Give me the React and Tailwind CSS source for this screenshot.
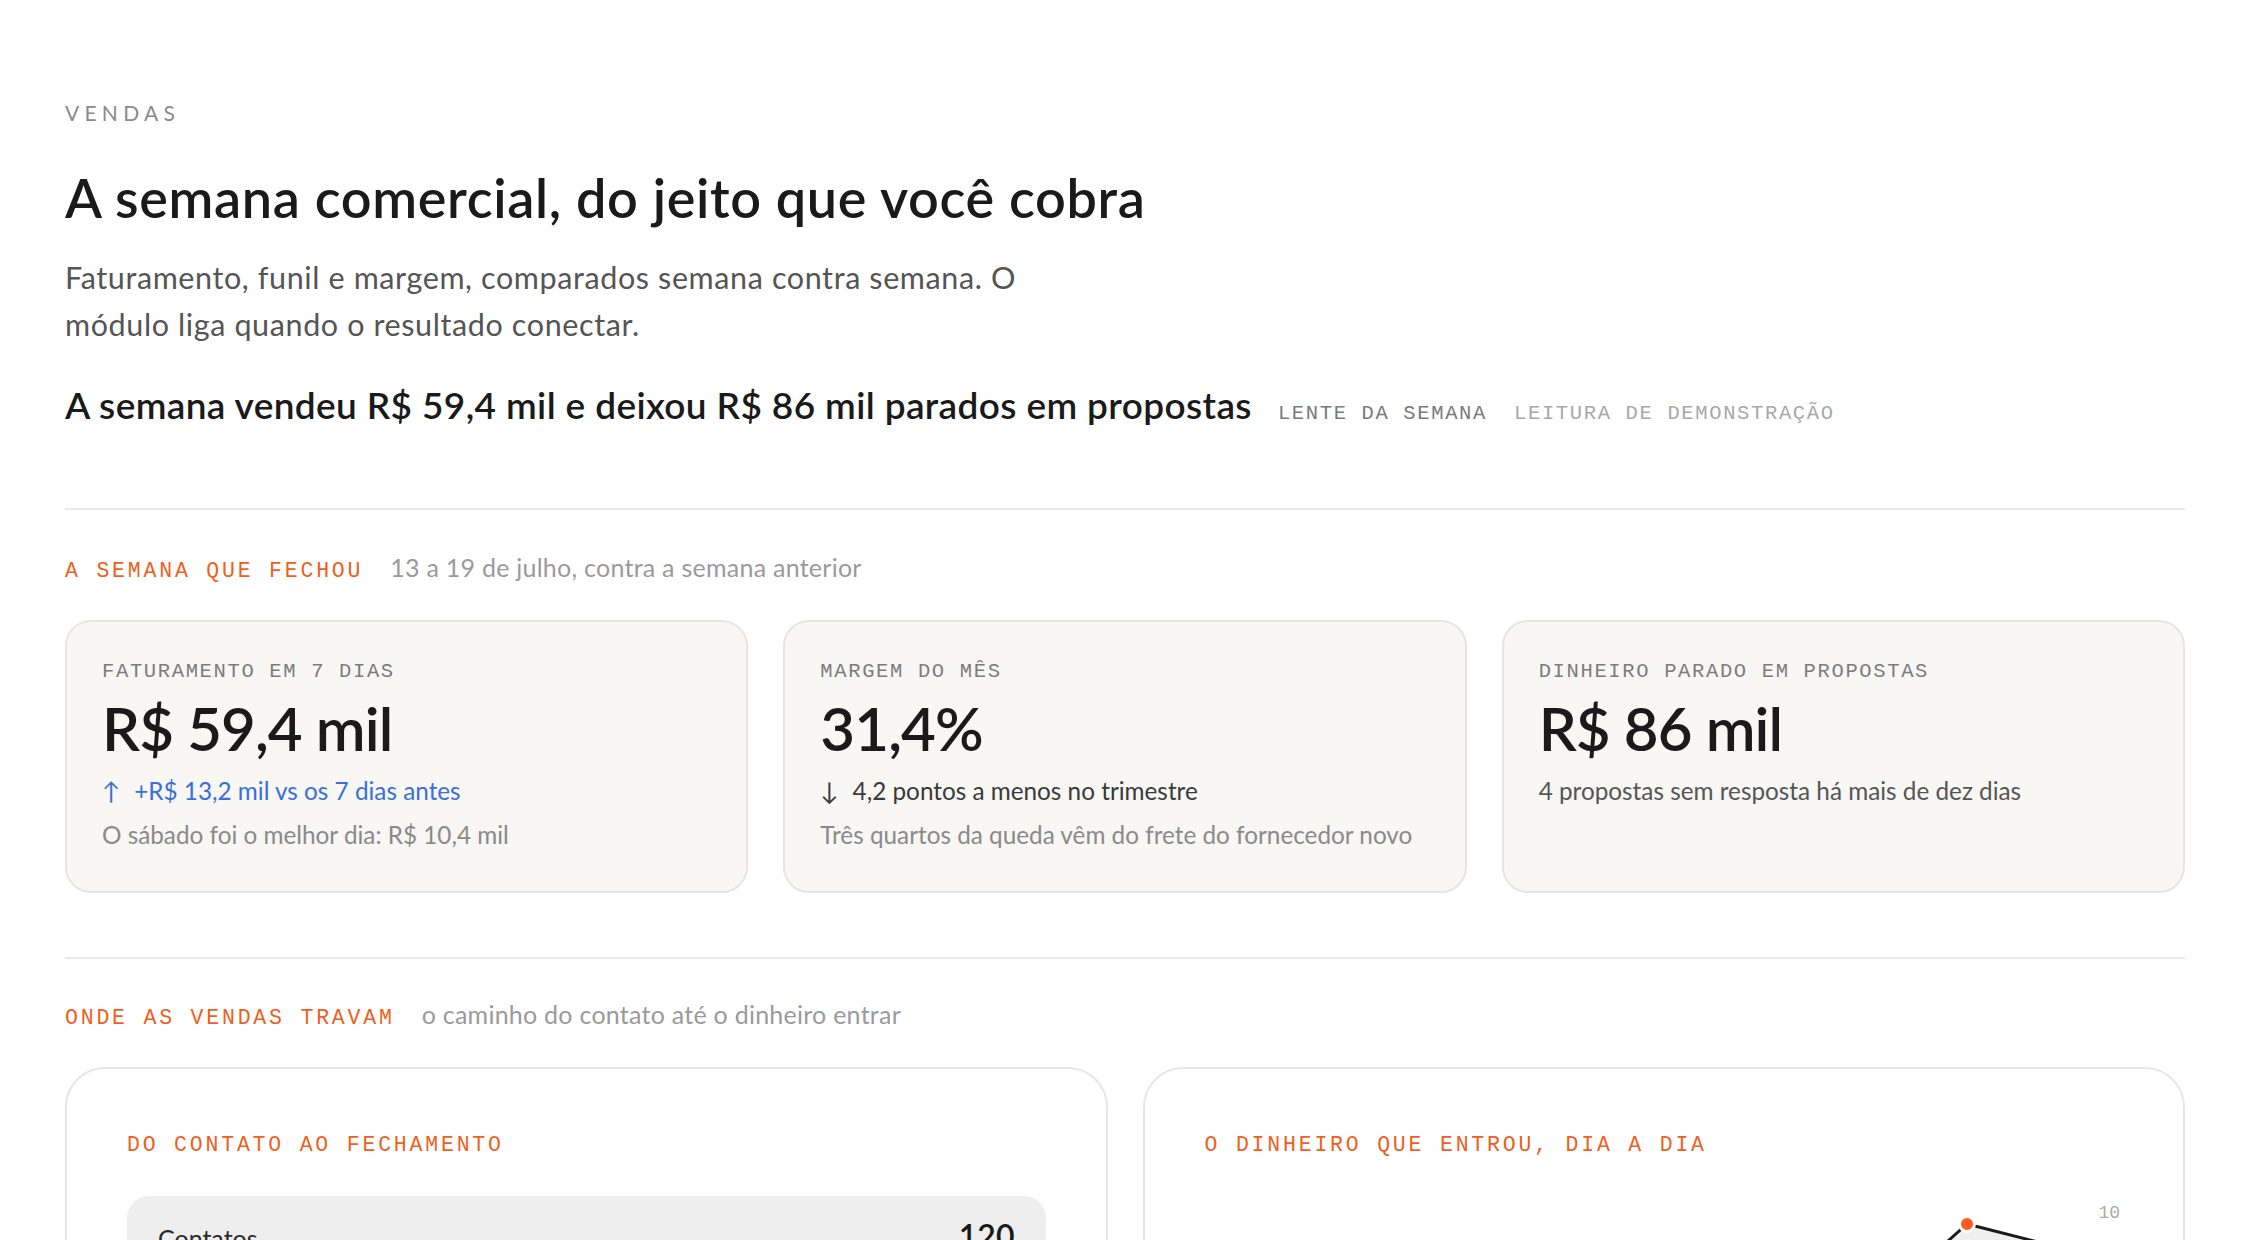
import React from 'react'

const mono = "font-['Liberation_Mono',monospace]"

const kpis = [
  {
    label: 'Faturamento em 7 dias',
    value: 'R$ 59,4 mil',
    delta: { arrow: '↑', text: '+R$ 13,2 mil vs os 7 dias antes', tone: 'text-[#3a6fd9]' },
    note: 'O sábado foi o melhor dia: R$ 10,4 mil',
  },
  {
    label: 'Margem do mês',
    value: '31,4%',
    delta: { arrow: '↓', text: '4,2 pontos a menos no trimestre', tone: 'text-[#3a3a3a]' },
    note: 'Três quartos da queda vêm do frete do fornecedor novo',
  },
  {
    label: 'Dinheiro parado em propostas',
    value: 'R$ 86 mil',
    line: '4 propostas sem resposta há mais de dez dias',
  },
]

const funnel = [
  { stage: 'Contatos', n: 120, pct: 100 },
  { stage: 'Conversas', n: 64, pct: 53 },
  { stage: 'Propostas', n: 22, pct: 18 },
  { stage: 'Fechados', n: 9, pct: 8 },
]

// seg..dom, R$ mil
const days = [9.0, 9.3, 9.2, 9.3, 3.7, 10.4, 8.5]

function SectionHead({ title, sub }) {
  return (
    <div className="flex items-baseline gap-[27px]">
      <span className={`${mono} text-[21.5px] leading-[28px] tracking-[0.13em] uppercase text-[#ef5f22]`}>{title}</span>
      <span className="text-[25px] leading-[28px] tracking-[0.01em] text-[#9a9a9a]">{sub}</span>
    </div>
  )
}

function KpiCard({ k }) {
  return (
    <div className="rounded-[26px] border-2 border-[#e6e5e2] bg-[#f8f7f4] px-[35px] pt-[38px] pb-[40px]">
      <p className={`${mono} text-[20.5px] leading-[24px] tracking-[0.08em] uppercase text-[#7c7c7c]`}>{k.label}</p>
      <p className="mt-[10px] text-[60px] leading-[68px] font-semibold tracking-[-0.015em] text-[#1a1a1a]">{k.value}</p>
      {k.delta && (
        <p className={`mt-[13px] flex items-center gap-[14px] text-[24.3px] leading-[32px] ${k.delta.tone}`}>
          <span>{k.delta.arrow}</span>
          <span>{k.delta.text}</span>
        </p>
      )}
      {k.note && <p className="mt-[12px] text-[24.3px] leading-[32px] text-[#8a8a8a]">{k.note}</p>}
      {k.line && <p className="mt-[13px] text-[24.3px] leading-[32px] text-[#555555]">{k.line}</p>}
    </div>
  )
}

function DailyChart() {
  const W = 923
  const pts = days.map((v, i) => [12 + i * 150, 44 + (10 - v) * 20])
  const line = pts.map(([x, y], i) => `${i ? 'L' : 'M'}${x} ${y}`).join(' ')
  const area = `${line} L${pts[6][0]} 244 L${pts[0][0]} 244 Z`
  const [mx, my] = pts[5]
  return (
    <svg width={W} height="300" viewBox={`0 0 ${W} 300`} className="mt-[30px] block">
      <path d={area} fill="#efefef" />
      <path d={line} fill="none" stroke="#1a1a1a" strokeWidth="3" strokeLinejoin="round" />
      <circle cx={mx} cy={my} r="7.5" fill="#ff5a1f" stroke="#ffffff" strokeWidth="3" />
      <text x={W - 8} y="30" textAnchor="end" fontFamily="Liberation Mono, monospace" fontSize="18" fill="#ababab">10</text>
      <text x={W - 8} y="150" textAnchor="end" fontFamily="Liberation Mono, monospace" fontSize="18" fill="#ababab">5</text>
    </svg>
  )
}

export default function App() {
  return (
    <div className="min-h-screen bg-white font-['Lato','Noto_Sans',sans-serif] text-[#1a1a1a]">
      <div className="pl-[65px] pr-[63px] pt-[100px] pb-[80px]">
        <p className="text-[21px] leading-[26px] tracking-[0.25em] text-[#8a8a8a]">VENDAS</p>
        <h1 className="mt-[41px] text-[54px] leading-[62px] font-semibold tracking-[0.012em] text-[#1a1a1a]">
          A semana comercial, do jeito que você cobra
        </h1>
        <p className="mt-[25px] max-w-[990px] text-[30.5px] leading-[47px] tracking-[0.02em] text-[#555555]">
          Faturamento, funil e margem, comparados semana contra semana. O módulo liga quando o resultado conectar.
        </p>
        <div className="mt-[35px] flex items-baseline gap-[26px]">
          <h2 className="text-[37px] leading-[44px] font-semibold tracking-[0.01em] text-[#1a1a1a]">
            A semana vendeu R$ 59,4 mil e deixou R$ 86 mil parados em propostas
          </h2>
          <div className={`${mono} flex gap-[27px] text-[20.5px] tracking-[0.08em] uppercase`}>
            <span className="text-[#7a7a7a]">Lente da semana</span>
            <span className="text-[#a8a8a8]">Leitura de demonstração</span>
          </div>
        </div>

        <div className="mt-[78px] border-t-2 border-[#e8e8e8] pt-[43px]">
          <SectionHead title="A semana que fechou" sub="13 a 19 de julho, contra a semana anterior" />
          <div className="mt-[35px] grid grid-cols-3 gap-[35px]">
            {kpis.map(k => <KpiCard key={k.label} k={k} />)}
          </div>
        </div>

        <div className="mt-[64px] border-t-2 border-[#e8e8e8] pt-[41px]">
          <SectionHead title="Onde as vendas travam" sub="o caminho do contato até o dinheiro entrar" />
          <div className="mt-[35px] grid grid-cols-2 gap-[35px]">
            <div className="rounded-[40px] border-2 border-[#e6e6e6] bg-white px-[60px] pt-[63px] pb-[60px]">
              <p className={`${mono} text-[21.5px] leading-[26px] tracking-[0.13em] uppercase text-[#ef5f22]`}>Do contato ao fechamento</p>
              <div className="mt-[38px] flex flex-col gap-[14px]">
                {funnel.map(f => (
                  <div key={f.stage} className="rounded-[22px] bg-[#eeeeee] px-[31px] pt-[16px] pb-[18px]">
                    <div className="flex items-baseline justify-between">
                      <span className="text-[25px] text-[#2a2a2a]">{f.stage}</span>
                      <span className="text-[32px] font-semibold text-[#1a1a1a]">{f.n}</span>
                    </div>
                    <div className="mt-[12px] h-[10px] rounded-full bg-[#dddddd]">
                      <div className="h-full rounded-full bg-[#1a1a1a]" style={{ width: `${f.pct}%` }} />
                    </div>
                  </div>
                ))}
              </div>
            </div>
            <div className="rounded-[40px] border-2 border-[#e6e6e6] bg-white px-[60px] pt-[63px] pb-[60px]">
              <p className={`${mono} text-[21.5px] leading-[26px] tracking-[0.13em] uppercase text-[#ef5f22]`}>O dinheiro que entrou, dia a dia</p>
              <DailyChart />
            </div>
          </div>
        </div>
      </div>
    </div>
  )
}
